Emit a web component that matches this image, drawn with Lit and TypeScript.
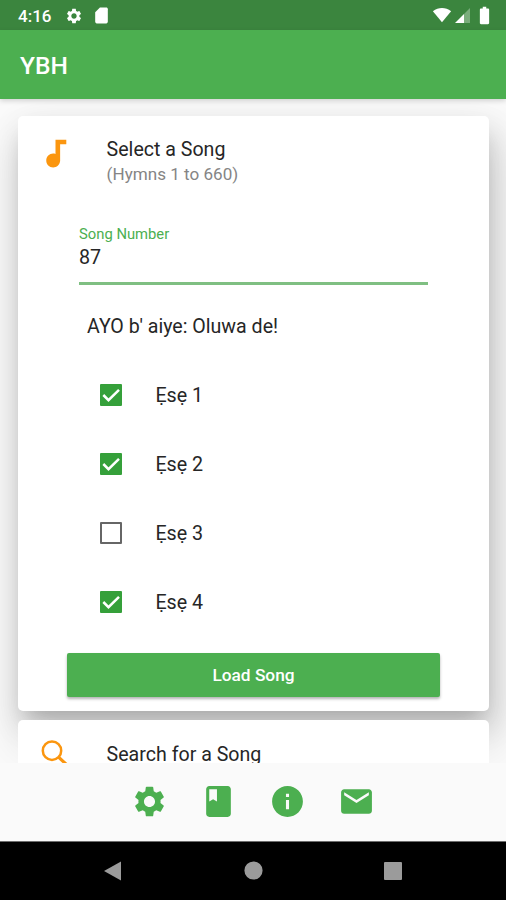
import { LitElement, html, css, svg } from "lit";
import { customElement, property } from "lit/decorators.js";

const ICONS: Record<string, string> = {
  gear: "M19.14 12.94c.04-.3.06-.61.06-.94 0-.32-.02-.64-.07-.94l2.03-1.58c.18-.14.23-.41.12-.61l-1.92-3.32c-.12-.22-.37-.29-.59-.22l-2.39.96c-.5-.38-1.03-.7-1.62-.94l-.36-2.54c-.04-.24-.24-.41-.48-.41h-3.84c-.24 0-.43.17-.47.41l-.36 2.54c-.59.24-1.13.57-1.62.94l-2.39-.96c-.22-.08-.47 0-.59.22L2.74 8.87c-.12.21-.08.47.12.61l2.03 1.58c-.05.3-.09.63-.09.94s.02.64.07.94l-2.03 1.58c-.18.14-.23.41-.12.61l1.92 3.32c.12.22.37.29.59.22l2.39-.96c.5.38 1.03.7 1.62.94l.36 2.54c.05.24.24.41.48.41h3.84c.24 0 .44-.17.47-.41l.36-2.54c.59-.24 1.13-.56 1.62-.94l2.39.96c.22.08.47 0 .59-.22l1.92-3.32c.12-.22.07-.47-.12-.61l-2.01-1.58zM12 15.6c-1.98 0-3.6-1.62-3.6-3.6s1.62-3.6 3.6-3.6 3.6 1.62 3.6 3.6-1.62 3.6-3.6 3.6z",
  sd: "M18 2h-8L4.02 8 4 20c0 1.1.9 2 2 2h12c1.1 0 2-.9 2-2V4c0-1.1-.9-2-2-2z",
  note: "M12 3v9.28c-.47-.17-.97-.28-1.5-.28C8.01 12 6 14.01 6 16.5S8.01 21 10.5 21c2.31 0 4.2-1.75 4.45-4H15V6h4V3h-7z",
  book: "M18 2H6c-1.1 0-2 .9-2 2v16c0 1.1.9 2 2 2h12c1.1 0 2-.9 2-2V4c0-1.1-.9-2-2-2zM6 4h5v8l-2.5-1.5L6 12V4z",
  info: "M12 2C6.48 2 2 6.48 2 12s4.480 10 10 10 10-4.480 10-10S17.520 2 12 2zm1 15h-2v-6h2v6zm0-8h-2V7h2v2z",
  mail: "M20 4H4c-1.1 0-1.99.9-1.99 2L2 18c0 1.1.9 2 2 2h16c1.1 0 2-.9 2-2V6c0-1.1-.9-2-2-2zm0 4l-8 5-8-5V6l8 5 8-5v2z",
  wifi: "M12 20.500L0.500 6.500C4 3.700 8 2.500 12 2.500s8 1.200 11.500 4z",
  battery: "M16 4h-2V2h-4v2H8c-.7 0-1.300.6-1.300 1.300v15.400c0 .7.6 1.300 1.300 1.300h8c.7 0 1.300-.6 1.300-1.300V5.300C17.300 4.600 16.700 4 16 4z",
  back: "M20 2.500v19L3 12z",
  home: "M12 2.500a9.500 9.500 0 1 0 0 19a9.500 9.500 0 1 0 0-19z",
  recent: "M4 3h16a1 1 0 0 1 1 1v16a1 1 0 0 1-1 1H4a1 1 0 0 1-1-1V4a1 1 0 0 1 1-1z",
};

const icon = (name: string, cls = "") =>
  html`<svg class="icon ${cls}" viewBox="0 0 24 24" aria-hidden="true">${svg`<path d=${ICONS[name]}></path>`}</svg>`;

@customElement("verse-row")
class VerseRow extends LitElement {
  @property() label = "";
  @property({ type: Boolean }) checked = false;

  static styles = css`
    :host { display: flex; align-items: center; height: 69px; padding-left: 82px; }
    .box { width: 22px; height: 22px; margin-bottom: 1px; box-sizing: border-box; border: 2px solid #666; border-radius: 1px; display: flex; align-items: center; justify-content: center; }
    .on { background: #35a03a; border-color: #35a03a; }
    .tick { width: 22px; height: 22px; flex: none; }
    .tick path { fill: none; stroke: #fff; stroke-width: 2.5; }
    .label { margin-left: 33.4px; font-size: 19.7px; color: #262626; }
  `;

  render() {
    return html`
      <div class="box ${this.checked ? "on" : ""}">
        ${this.checked ? html`<svg class="tick" viewBox="0 0 22 22"><path d="M3.300 11l5.200 5.200L19 5.800"></path></svg>` : ""}
      </div>
      <span class="label">${this.label}</span>
    `;
  }
}

@customElement("app-root")
class AppRoot extends LitElement {
  private verses = [
    { label: "Ẹsẹ 1", checked: true },
    { label: "Ẹsẹ 2", checked: true },
    { label: "Ẹsẹ 3", checked: false },
    { label: "Ẹsẹ 4", checked: true },
  ];

  static styles = css`
    :host { display: flex; flex-direction: column; height: 900px; width: 506px; overflow: hidden; background: #fafafa; font-family: Roboto, "Noto Sans", sans-serif; color: #262626; }
    .icon { display: block; flex: none; fill: currentColor; }
    .status { flex: none; display: flex; align-items: center; height: 30px; box-sizing: border-box; padding: 1px 14px 0 18px; background: #3b853e; color: #fff; z-index: 2; }
    .time { font-size: 17px; font-weight: 500; width: 47px; }
    .s-gear { width: 18px; height: 18px; margin-right: 9px; }
    .s-sd { width: 19px; height: 19px; margin-bottom: 1px; }
    .grow { flex: 1; }
    .s-wifi { width: 20px; height: 19px; }
    .s-signal { width: 15px; height: 15px; margin: 0 4px 0 3px; }
    .s-signal .dim { fill: #79ad7b; }
    .s-battery { width: 21px; height: 21px; margin: 0 -3px 1px 0; }
    .bar { flex: none; display: flex; align-items: center; height: 69px; box-sizing: border-box; padding: 1px 20px 0; background: #4caf50; color: #fff; font-size: 24.500px; font-weight: 500; z-index: 2; box-shadow: 0 2px 5px rgba(0,0,0,.16); }
    .content { flex: none; height: 664px; overflow: hidden; box-sizing: border-box; padding: 17px 17px 0 18px; display: flex; flex-direction: column; gap: 9px; }
    .card { flex: none; background: #fff; border-radius: 5px; }
    .song { height: 595px; box-shadow: 0 14px 19px -9px rgba(0,0,0,.16), 4px 30px 44px 4px rgba(0,0,0,.13), 4px 12px 32px 3px rgba(0,0,0,.11); }
    .find { height: 200px; }
    .head { display: flex; align-items: flex-start; height: 101px; box-sizing: border-box; padding: 19px 0 0 19px; }
    .head .icon { width: 37px; height: 37px; color: #fb960f; }
    .head .lens { fill: none; stroke: currentColor; }
    .find .head { padding-top: 15px; }
    .titles { margin-left: 32.6px; padding-top: 1px; }
    .find .titles { padding-top: 6px; }
    .title { font-size: 19.600px; line-height: 27px; }
    .sub { font-size: 17.100px; line-height: 22px; color: #858585; }
    .field { margin: 8px 61px 0 61px; height: 60px; box-sizing: border-box; border-bottom: 3px solid #7fbf82; }
    .field-label { font-size: 14.800px; line-height: 19px; color: #4caf50; }
    .value { font-size: 19.700px; line-height: 28px; }
    .first-line { padding-left: 69px; height: 76px; display: flex; align-items: center; padding-top: 7px; box-sizing: border-box; font-size: 19.600px; }
    .load { margin: 16px 49px 0; height: 44px; display: flex; align-items: center; justify-content: center; background: #4caf50; color: #fff; border-radius: 2px; font-size: 17.300px; font-weight: 500; box-shadow: 0 2px 3px rgba(0,0,0,.3); }
    .tools { flex: none; height: 78px; box-sizing: border-box; padding: 0 0 1px 0; display: flex; align-items: center; justify-content: center; gap: 32px; background: #fafafa; color: #4caf50; z-index: 2; }
    .tools .icon { width: 37px; height: 37px; }
    .nav { flex: 1; display: flex; justify-content: center; align-items: center; gap: 116.500px; background: #000; color: #9b9b9b; z-index: 2; border-top: 1px solid #6d6d6d; padding-bottom: 1px; }
    .nav .icon { width: 24px; height: 24px; }
    .nav .n-home { width: 23px; height: 23px; }
  `;

  render() {
    return html`
      <div class="status">
        <span class="time">4:16</span>
        ${icon("gear", "s-gear")}${icon("sd", "s-sd")}
        <span class="grow"></span>
        ${icon("wifi", "s-wifi")}
        <svg class="icon s-signal" viewBox="0 0 15 15"><path class="dim" d="M15 0v15H9V6z"></path><path d="M9 6v9H0z"></path></svg>
        ${icon("battery", "s-battery")}
      </div>
      <div class="bar">YBH</div>
      <div class="content">
        <section class="card song">
          <div class="head">
            ${icon("note")}
            <div class="titles">
              <div class="title">Select a Song</div>
              <div class="sub">(Hymns 1 to 660)</div>
            </div>
          </div>
          <div class="field">
            <div class="field-label">Song Number</div>
            <div class="value">87</div>
          </div>
          <div class="first-line">AYO b' aiye: Oluwa de!</div>
          ${this.verses.map((v) => html`<verse-row .label=${v.label} .checked=${v.checked}></verse-row>`)}
          <div class="load">Load Song</div>
        </section>
        <section class="card find">
          <div class="head">
            <svg class="icon lens" viewBox="0 0 37 37" aria-hidden="true">
              <circle cx="15" cy="15.700" r="9.200" stroke-width="2.500"></circle>
              <path d="M21.300 21.800l9 8.500" stroke-width="3.200"></path>
            </svg>
            <div class="titles"><div class="title">Search for a Song</div></div>
          </div>
        </section>
      </div>
      <div class="tools">${icon("gear")}${icon("book")}${icon("info")}${icon("mail")}</div>
      <div class="nav">${icon("back")}${icon("home", "n-home")}${icon("recent")}</div>
    `;
  }
}
